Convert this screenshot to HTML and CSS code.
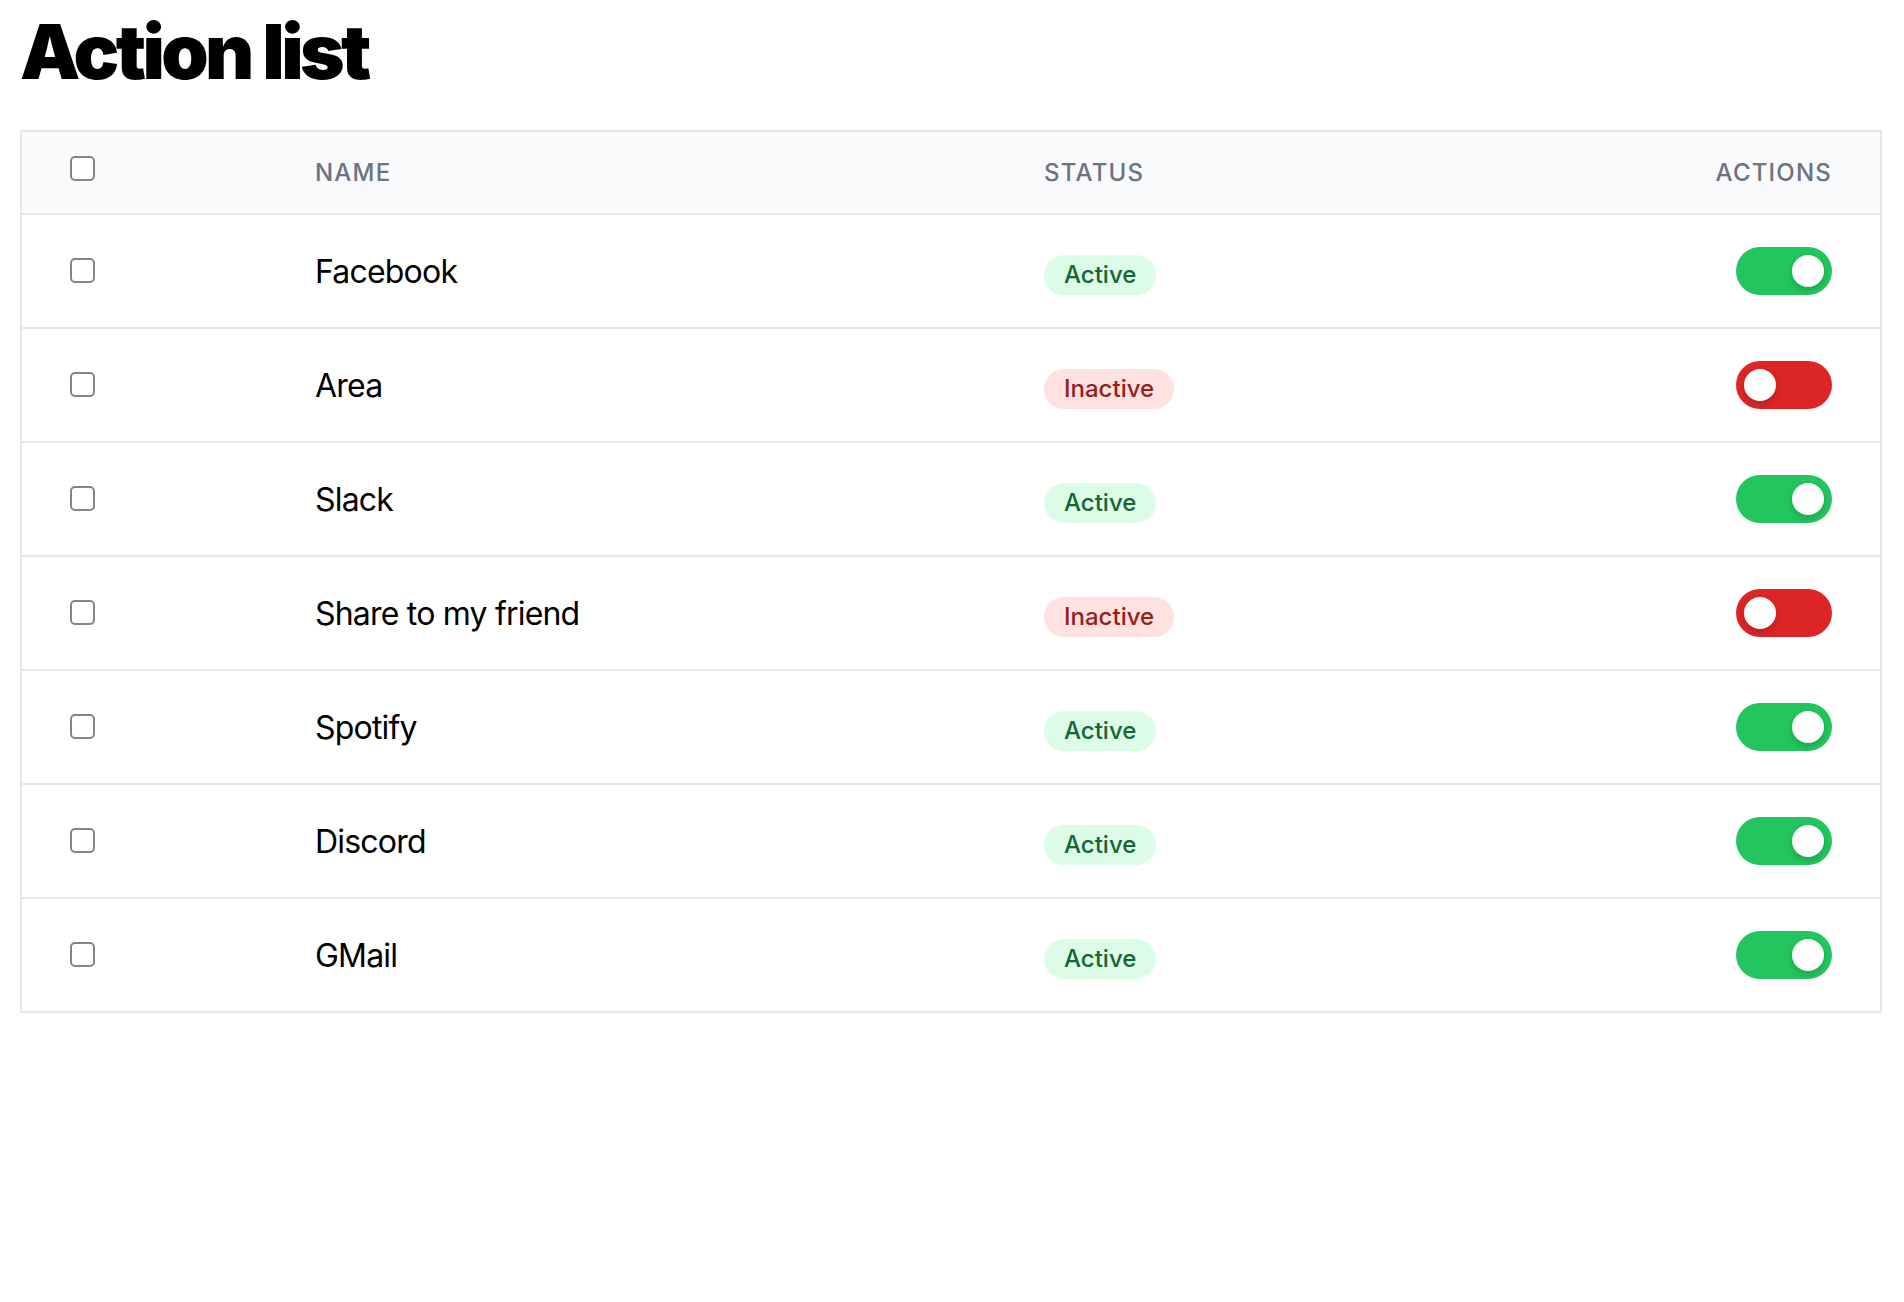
FILE: index.html
```html
<!DOCTYPE html>
<html lang="en">
<head>
<meta charset="utf-8">
<title>Action list</title>
<link rel="stylesheet" href="styles.css">
</head>
<body>
<main class="page">
  <h1 class="title">Action list</h1>
  <table class="actions">
    <colgroup>
      <col class="c-check"><col class="c-name"><col class="c-status"><col class="c-act">
    </colgroup>
    <thead>
      <tr>
        <th class="cell-check"><input type="checkbox" class="check"></th>
        <th>Name</th>
        <th>Status</th>
        <th class="right">Actions</th>
      </tr>
    </thead>
    <tbody>
      <tr>
        <td class="cell-check"><input type="checkbox" class="check"></td>
        <td class="name">Facebook</td>
        <td><span class="badge on">Active</span></td>
        <td class="right"><span class="toggle on"><span class="knob"></span></span></td>
      </tr>
      <tr>
        <td class="cell-check"><input type="checkbox" class="check"></td>
        <td class="name">Area</td>
        <td><span class="badge off">Inactive</span></td>
        <td class="right"><span class="toggle off"><span class="knob"></span></span></td>
      </tr>
      <tr>
        <td class="cell-check"><input type="checkbox" class="check"></td>
        <td class="name">Slack</td>
        <td><span class="badge on">Active</span></td>
        <td class="right"><span class="toggle on"><span class="knob"></span></span></td>
      </tr>
      <tr>
        <td class="cell-check"><input type="checkbox" class="check"></td>
        <td class="name">Share to my friend</td>
        <td><span class="badge off">Inactive</span></td>
        <td class="right"><span class="toggle off"><span class="knob"></span></span></td>
      </tr>
      <tr>
        <td class="cell-check"><input type="checkbox" class="check"></td>
        <td class="name">Spotify</td>
        <td><span class="badge on">Active</span></td>
        <td class="right"><span class="toggle on"><span class="knob"></span></span></td>
      </tr>
      <tr>
        <td class="cell-check"><input type="checkbox" class="check"></td>
        <td class="name">Discord</td>
        <td><span class="badge on">Active</span></td>
        <td class="right"><span class="toggle on"><span class="knob"></span></span></td>
      </tr>
      <tr>
        <td class="cell-check"><input type="checkbox" class="check"></td>
        <td class="name">GMail</td>
        <td><span class="badge on">Active</span></td>
        <td class="right"><span class="toggle on"><span class="knob"></span></span></td>
      </tr>
    </tbody>
  </table>
</main>
</body>
</html>
```
FILE: styles.css
```css
* { box-sizing: border-box; }
html, body { margin: 0; padding: 0; background: #fff; }
body {
  font-family: Inter, "Noto Sans", "Liberation Sans", sans-serif;
  color: #000;
}
.page {
  padding: 0 22px 0 20px;
}
.title {
  margin: 0;
  padding-top: 13px;
  font-size: 76px;
  line-height: 76px;
  font-weight: 900;
  letter-spacing: -0.048em;
  height: 130px;
}
.actions {
  width: 1862px;
  border-collapse: collapse;
  border: 2px solid #e5e7eb;
  table-layout: fixed;
}
.c-check { width: 246px; }
.c-name { width: 729px; }
.c-status { width: 599px; }
.actions thead tr {
  background: #f9fafb;
  border-bottom: 2px solid #e5e7eb;
}
.actions th {
  padding: 24px 48px;
  height: 80px;
  font-size: 24px;
  line-height: 32px;
  font-weight: 500;
  color: #6b7280;
  text-transform: uppercase;
  letter-spacing: 0.05em;
  text-align: left;
  vertical-align: middle;
}
.actions th.right { text-align: right; }
.actions tbody tr + tr { border-top: 2px solid #e5e7eb; }
.actions td {
  padding: 33px 48px 31px;
  height: 112px;
  font-size: 32px;
  line-height: 48px;
  font-weight: 400;
  vertical-align: middle;
  white-space: nowrap;
}
.actions td.name { letter-spacing: -0.025em; }
.actions td.right { text-align: right; padding-top: 32px; padding-bottom: 32px; }
.check {
  appearance: none;
  -webkit-appearance: none;
  margin: 0;
  width: 25px;
  height: 25px;
  border: 2px solid #858585;
  border-radius: 5px;
  background: #fff;
  vertical-align: baseline;
  display: inline-block;
}
.badge {
  display: inline-block;
  padding: 4px 20px;
  font-size: 24px;
  line-height: 32px;
  font-weight: 500;
  border-radius: 999px;
  vertical-align: baseline;
}
.badge.on { background: #dcfce7; color: #166534; }
.badge.off { background: #fee2e2; color: #991b1b; }
.toggle {
  display: inline-flex;
  align-items: center;
  width: 96px;
  height: 48px;
  padding: 0 8px;
  border-radius: 999px;
  vertical-align: top;
}
.toggle.on { background: #22c55e; justify-content: flex-end; }
.toggle.off { background: #dc2626; justify-content: flex-start; }
.knob {
  width: 32px;
  height: 32px;
  border-radius: 50%;
  background: #fff;
  box-shadow: 0 3px 6px rgba(0, 0, 0, 0.18);
}
```
